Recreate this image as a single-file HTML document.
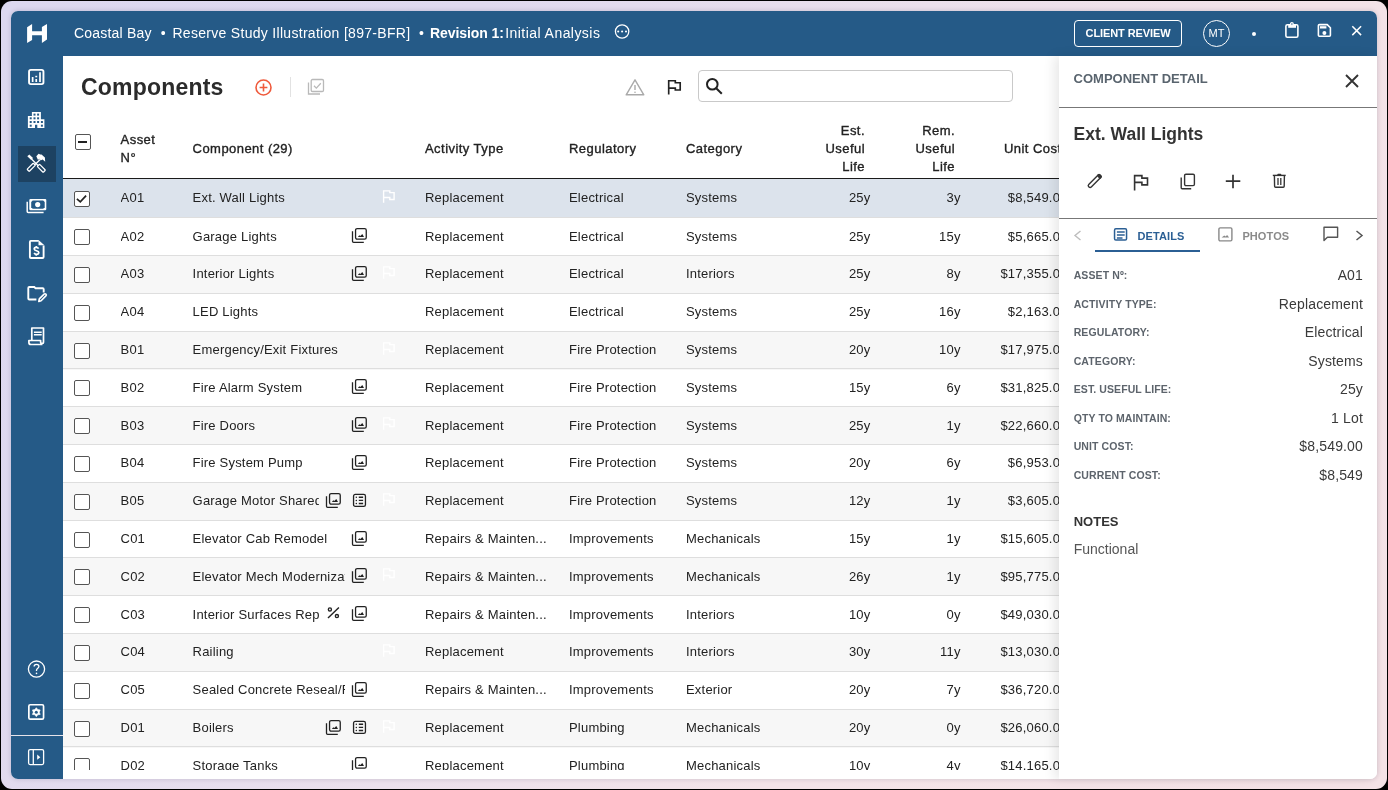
<!DOCTYPE html>
<html><head><meta charset="utf-8">
<style>
*{box-sizing:border-box;margin:0;padding:0}
html,body{width:1388px;height:790px;overflow:hidden;background:#000;font-family:"Liberation Sans",sans-serif;color:#222;-webkit-font-smoothing:antialiased}
.tbl,.panel,.win{will-change:transform}
.frame{position:absolute;left:1px;top:1px;width:1386px;height:788px;border-radius:11px;background:linear-gradient(125deg,#dcd8f0 0%,#dfd9ef 25%,#ebe0ec 48%,#f3e3e8 68%,#f4e2e6 100%)}
.win{position:absolute;left:11px;top:11px;width:1366px;height:768px;border-radius:7px;overflow:hidden;background:#fff;box-shadow:0 0 5px rgba(40,30,60,0.18)}
.abs{position:absolute}
.crumb{position:absolute;left:63px;top:0;height:45px;line-height:44px;font-size:14px;color:#fff;white-space:nowrap;letter-spacing:0.3px}
.crumb b{font-weight:bold;letter-spacing:-0.1px}
.main{position:absolute;left:52px;top:45px;width:1314px;height:723px;background:#fff}
.t{position:absolute;white-space:nowrap;font-size:13px;line-height:16px;overflow:hidden;letter-spacing:0.2px;color:#222}
.row{position:absolute;left:0;width:1010px;height:39px;border-top:1px solid #dedede}
.row.alt{background:#f7f7f7}
.row.sel{background:#dce3ec;border-top:none;height:38px}
.row.sel .cb{top:12px;left:11px}
.cb{position:absolute;left:11px;top:11px;width:16px;height:16px;border:1.2px solid #555;border-radius:2px;background:#fff}
.cb svg{position:absolute;left:0;top:0}
.ic{position:absolute;top:10px;width:16px;height:16px}
.row.sel .ic{top:11px}
.ic svg{display:block;overflow:visible}
.ic.fl{left:319px}
.row .t{top:11px}
.row.up .t{top:10px}
.c-asset{left:57.6px}
.c-comp{left:129.6px}
.c-act{left:362px}
.c-reg{left:506px}
.c-cat{left:623px}
.c-est{right:202.5px}
.c-rem{right:112.4px}
.c-cost{right:5.5px}
.th{position:absolute;font-size:13px;line-height:18px;white-space:nowrap;color:#222;-webkit-text-stroke:0.35px #222;letter-spacing:0.45px}
.tbl{position:absolute;left:63px;top:56px;width:996px;height:714px;overflow:hidden;background:#fff}
.panel{position:absolute;left:1059px;top:56px;width:318px;height:723px;background:#fff;border-bottom-right-radius:7px;box-shadow:-5px 0 12px rgba(0,0,0,0.09)}
.lbl{position:absolute;left:14.7px;font-size:10.5px;line-height:12px;font-weight:bold;color:#5d646c;white-space:nowrap;letter-spacing:0.1px}
.val{position:absolute;right:14px;font-size:14px;line-height:16px;color:#3a3a3a;white-space:nowrap;text-align:right;letter-spacing:0.15px}
.side{position:absolute;left:0;top:0}
</style></head><body>
<div class="frame"></div>
<div class="win">
  <div class="abs" style="left:0;top:0;width:1366px;height:45px;background:#255a87"></div>
  <div class="abs" style="left:0;top:45px;width:52px;height:723px;background:#255a87"></div>
  <div class="crumb"><span style="letter-spacing:0.2px">Coastal Bay</span><span style="margin:0 6.5px 0 9px">•</span>Reserve Study Illustration [897-BFR]<span style="margin:0 6px 0 8.5px">•</span><b>Revision 1:</b><span style="letter-spacing:0.45px;margin-left:1.5px">Initial Analysis</span></div>
  <svg class="abs" style="left:603px;top:13px" width="16" height="16" viewBox="0 0 16 16" fill="none" stroke="#fff" stroke-width="1.3"><circle cx="8.1" cy="7.5" r="6.7"/><circle cx="4.2" cy="7.5" r="1.05" fill="#fff" stroke="none"/><circle cx="8.1" cy="7.5" r="1.05" fill="#fff" stroke="none"/><circle cx="12" cy="7.5" r="1.05" fill="#fff" stroke="none"/></svg>
  <!-- right header -->
  <div class="abs" style="left:1063px;top:9px;width:108px;height:27px;border:1px solid #fff;border-radius:4px;color:#fff;font-size:11px;font-weight:bold;line-height:25px;text-align:center;letter-spacing:-0.1px">CLIENT REVIEW</div>
  <div class="abs" style="left:1192px;top:9px;width:27px;height:27px;border:1px solid #fff;border-radius:50%;color:#fff;font-size:11px;line-height:25px;text-align:center">MT</div>
  <div class="abs" style="left:1241px;top:21px;width:4px;height:4px;border-radius:50%;background:#fff"></div>
  <svg class="abs" style="left:1273px;top:9.5px;overflow:visible" width="16" height="17" viewBox="0 0 16 17" fill="none" stroke="#fff" stroke-width="1.6"><rect x="1.9" y="3.8" width="12" height="12.4" rx="1.5"/><rect x="4.2" y="3" width="7.8" height="3.8" fill="#fff" stroke="none"/><circle cx="7.9" cy="2.9" r="1.35" fill="#255a87" stroke-width="1.2"/></svg>
  <svg class="abs" style="left:1305px;top:11px;overflow:visible" width="16" height="16" viewBox="0 0 16 16" fill="none" stroke="#fff" stroke-width="1.6"><path d="M2.4 3.6c0-.6.4-1 1-1H11.2L14.4 5.8V13.3c0 .6-.4 1-1 1H3.4c-.6 0-1-.4-1-1Z"/><rect x="4" y="4.2" width="6.4" height="2.3" fill="#fff" stroke="none"/><circle cx="8.4" cy="10.9" r="2" fill="#fff" stroke="none"/></svg>
  <svg class="abs" style="left:1340px;top:14px;overflow:visible" width="12" height="12" viewBox="0 0 12 12" fill="none" stroke="#fff" stroke-width="1.5"><path d="M1.3 1.3L10.1 10.1M10.1 1.3L1.3 10.1"/></svg>
  <!-- sidebar -->
  <svg class="side" width="52" height="768" viewBox="11 11 52 768" fill="none" stroke="#fff" stroke-width="1.5">
    <!-- logo -->
    <path d="M27.1 27.3L32.1 23.9V31.2H41.9V27.1L47 23.9V39.5L41.9 43V35.2H32.1V39.9L27.1 42.9Z" fill="#fff" stroke="none"/>
    <!-- chart -->
    <rect x="29.05" y="69.85" width="14.4" height="14.3" rx="1.8" stroke-width="1.9"/>
    <path d="M32.65 77v4.9M36.25 79v2.9M40 72.2v9.7" stroke-width="1.7"/>
    <rect x="35.3" y="75.8" width="1.9" height="1.5" fill="#fff" stroke="none"/>
    <!-- building -->
    <path d="M31.9 112.1h9v7.1h3.5v8.8h-7.1v-3.25h-2.3v3.25h-7.1v-12.1h4z" fill="#fff" stroke="none"/>
    <g fill="#255a87" stroke="none"><rect x="33.5" y="113.6" width="2" height="2"/><rect x="37.1" y="113.6" width="2" height="2"/><rect x="29.7" y="117.3" width="2" height="2"/><rect x="33.5" y="117.3" width="2" height="2"/><rect x="37.1" y="117.3" width="2" height="2"/><rect x="29.7" y="121" width="2" height="2"/><rect x="33.5" y="121" width="2" height="2"/><rect x="37.1" y="121" width="2" height="2"/><rect x="40.9" y="121" width="2" height="2"/><rect x="29.7" y="124.7" width="2" height="2"/><rect x="40.9" y="124.7" width="2" height="2"/></g>
    <!-- active -->
    <rect x="18" y="146" width="38" height="36" fill="#1d4262" stroke="none"/>
    <path d="M31.5 159l6.5 6.5M40.5 159.2L34.5 165" stroke-width="1.3"/>
    <path d="M27.3 156.2l2-1.8 3.7 3.7-1.8 1.9z" fill="#fff" stroke="none"/>
    <rect x="29.75" y="162.9" width="3" height="8.8" rx=".6" transform="rotate(45 31.25 167.3)" stroke-width="1.25"/>
    <rect x="39.75" y="164.1" width="3.2" height="8.4" rx=".6" transform="rotate(-45 41.35 168.3)" stroke-width="1.25"/>
    <path d="M36.3 156.3l2.3-2.5 1.5.8 1.4-.2 3.4 3.2.3 4.1-2.5-2.3-1.7.9-1.6-1.6-1.4 1.2z" fill="#fff" stroke="none"/>
    <!-- money -->
    <rect x="29.3" y="198.9" width="17" height="11.4" rx="1.2" fill="#fff" stroke="none"/>
    <path d="M32.7 200.4h10.5l1.5 1.5v5.4l-1.5 1.5H32.7l-1.5-1.5v-5.4z" fill="#255a87" stroke="none"/>
    <circle cx="37.7" cy="204.6" r="2.6" fill="#fff" stroke="none"/>
    <path d="M27.2 201.8v9.6c0 .6.4 1 1 1h15.4" stroke-width="1.5"/>
    <!-- doc $ -->
    <path d="M38.7 240.9H30.9c-.6 0-1 .4-1 1v15.1c0 .6.4 1 1 1h11.7c.6 0 1-.4 1-1V245.5" stroke-width="1.9"/>
    <path d="M38.5 240.1l5.9 5.2h-5.9z" fill="#fff" stroke="none"/>
    <path d="M38.6 248.6c-.4-.8-1.2-1.2-2.3-1.2-1.3 0-2.1.7-2.1 1.6 0 2.2 4.6 1.2 4.6 3.6 0 1-.9 1.7-2.3 1.7-1.1 0-1.9-.5-2.4-1.3M36.3 246v1.4M36.3 254.3v1.5" stroke-width="1.7"/>
    <!-- folder edit -->
    <path d="M36.4 299.5H29.3c-.6 0-1-.4-1-1V288c0-.6.4-1 1-1h5l1.3 1.3h7.1c.6 0 1 .4 1 1v3.1" stroke-width="1.9"/>
    <path d="M38.8 301.5l.5-2.6 4.8-4.8c.5-.5 1.3-.5 1.8 0s.5 1.3 0 1.8l-4.8 4.8z" stroke-width="1.6" stroke-linejoin="round"/>
    <!-- receipt -->
    <path d="M31.8 340.5V328h11.7v14.3c0 .6-.4 1-1 1h-.9c-.6 0-1-.4-1-1v-1.8H28.9v2c0 1 .7 2 2 2h11.5" stroke-width="1.7" stroke-linejoin="round"/>
    <path d="M33.9 332.3h7.8M33.9 334.8h7.8" stroke-width="1.5"/>
    <!-- help -->
    <circle cx="36.5" cy="669.1" r="8.1" stroke-width="1.3"/>
    <path d="M34.1 666.6c0-1.4 1.1-2.3 2.4-2.3 1.4 0 2.4.9 2.4 2.2 0 1.7-2.4 1.7-2.4 3.8v.7" stroke-width="1.3"/>
    <circle cx="36.5" cy="673.4" r=".8" fill="#fff" stroke="none"/>
    <!-- settings -->
    <rect x="28.85" y="704.75" width="14.7" height="14.4" rx="1.4" stroke-width="1.7"/>
    <path d="M36.3 707.7L37.8 709.6L40.2 709.95L39.3 712.2L40.2 714.45L37.8 714.8L36.3 716.7L34.8 714.8L32.4 714.45L33.3 712.2L32.4 709.95L34.8 709.6Z" fill="#fff" stroke="#fff" stroke-width=".6" stroke-linejoin="round"/>
    <circle cx="36.3" cy="712.2" r="1.5" fill="#255a87" stroke="none"/>
    <path d="M11 735.5h52" stroke="#e6e3ea" stroke-width="1"/>
    <!-- toggle -->
    <rect x="28.6" y="749.6" width="15" height="15" rx="1.5" stroke-width="1.3"/>
    <path d="M33.3 750v14.5" stroke-width="1.3"/>
    <path d="M37.2 754.6l3.1 2.6-3.1 2.6z" fill="#fff" stroke="none"/>
  </svg>
</div>
<div class="tbl">
  <div class="abs" style="left:18px;top:18px;font-size:23px;font-weight:bold;color:#2b2b2b;line-height:26px;letter-spacing:0.2px">Components</div>
  <svg class="abs" style="left:192px;top:22.5px" width="17" height="17" viewBox="0 0 17 17" fill="none" stroke="#ef5a3c" stroke-width="1.6"><circle cx="8.5" cy="8.5" r="7.5"/><path d="M8.5 4.6v7.8M4.6 8.5h7.8"/></svg>
  <div class="abs" style="left:227px;top:21px;width:1px;height:20px;background:#e2e2e2"></div>
  <svg class="abs" style="left:244px;top:22px" width="18" height="18" viewBox="0 0 18 18" fill="none" stroke="#b9b9b9" stroke-width="1.3"><path d="M1.5 4.5v11.5h11.5"/><rect x="4.2" y="1.5" width="12.3" height="12" rx="1.3"/><path d="M7 7.8l2.3 2.3 4.5-4.8"/></svg>
  <svg class="abs" style="left:562px;top:22px" width="20" height="18" viewBox="0 0 20 18" fill="none" stroke="#a9a9a9" stroke-width="1.4"><path d="M10 1.8L1.2 16.8h17.6z" stroke-linejoin="round"/><path d="M10 7v5"/><circle cx="10" cy="14.2" r=".8" fill="#a9a9a9" stroke="none"/></svg>
  <svg class="abs" style="left:603px;top:23px" width="16" height="16" viewBox="0 0 16 16" fill="none" stroke="#222" stroke-width="1.65"><path d="M2.7 15.6V1.7h6.6v2h4.9v7.3H9.3V9.1H2.7"/></svg>
  <div class="abs" style="left:635px;top:14px;width:315px;height:31.5px;border:1px solid #c9c9c9;border-radius:4px"></div>
  <svg class="abs" style="left:642px;top:21px" width="19" height="18" viewBox="0 0 19 18" fill="none" stroke="#222" stroke-width="2"><circle cx="7.3" cy="7.2" r="5.3"/><path d="M11.2 11.2l5.6 5.6"/></svg>
  <!-- table header -->
  <div class="abs" style="left:12px;top:78px;width:15.5px;height:15.5px;border:1.2px solid #555;border-radius:2px"><div class="abs" style="left:2px;top:6px;width:9px;height:1.5px;background:#222"></div></div>
  <div class="th" style="left:57.6px;top:74.5px">Asset<br>N°</div>
  <div class="th" style="left:129.6px;top:83.5px">Component (29)</div>
  <div class="th" style="left:362px;top:83.5px">Activity Type</div>
  <div class="th" style="left:506px;top:83.5px">Regulatory</div>
  <div class="th" style="left:623px;top:83.5px">Category</div>
  <div class="th" style="right:194px;top:65.5px;text-align:right">Est.<br>Useful<br>Life</div>
  <div class="th" style="right:104px;top:65.5px;text-align:right">Rem.<br>Useful<br>Life</div>
  <div class="th" style="left:941px;top:83.5px">Unit Cost</div>
  <div class="abs" style="left:0;top:122px;width:1010px;height:1px;background:#1a1a1a"></div>
<div class="row sel" style="top:123.000px"><span class="cb on"><svg width="14" height="14" viewBox="0 0 14 14"><path d="M1.9 6.8l3.4 3.1 5.8-6.2" fill="none" stroke="#222" stroke-width="1.7"/></svg></span><span class="t c-asset">A01</span><span class="t c-comp" style="width:180px">Ext. Wall Lights</span><span class="ic fl"><svg width="14" height="16" viewBox="0 0 14 16" fill="none" stroke="#fff" stroke-width="1.4"><path d="M1.6 12.7V0.9h6.2v1.7h4.3v6.9H7.8V7.5H1.6"/></svg></span><span class="t c-act">Replacement</span><span class="t c-reg">Electrical</span><span class="t c-cat">Systems</span><span class="t c-est">25y</span><span class="t c-rem">3y</span><span class="t c-cost">$8,549.00</span></div>
<div class="row" style="top:161.000px"><span class="cb"></span><span class="t c-asset">A02</span><span class="t c-comp" style="width:152px">Garage Lights</span><span class="ic" style="left:289px"><svg width="16" height="16" viewBox="0 0 16 16" fill="none" stroke="#222" stroke-width="1.3"><path d="M0.5 3.2V13.3c0 .6.4 1.1 1.1 1.1H11.8"/><rect x="3.55" y="0.55" width="10.7" height="10.6" rx="1.6"/><path d="M5.9 8.9L7.3 7.2 8.3 8.1 10.3 5.9 12 8.9z" fill="#222" stroke="none"/></svg></span><span class="ic fl"><svg width="14" height="16" viewBox="0 0 14 16" fill="none" stroke="#fff" stroke-width="1.4"><path d="M1.6 12.7V0.9h6.2v1.7h4.3v6.9H7.8V7.5H1.6"/></svg></span><span class="t c-act">Replacement</span><span class="t c-reg">Electrical</span><span class="t c-cat">Systems</span><span class="t c-est">25y</span><span class="t c-rem">15y</span><span class="t c-cost">$5,665.00</span></div>
<div class="row up alt" style="top:199.000px"><span class="cb"></span><span class="t c-asset">A03</span><span class="t c-comp" style="width:152px">Interior Lights</span><span class="ic" style="left:289px"><svg width="16" height="16" viewBox="0 0 16 16" fill="none" stroke="#222" stroke-width="1.3"><path d="M0.5 3.2V13.3c0 .6.4 1.1 1.1 1.1H11.8"/><rect x="3.55" y="0.55" width="10.7" height="10.6" rx="1.6"/><path d="M5.9 8.9L7.3 7.2 8.3 8.1 10.3 5.9 12 8.9z" fill="#222" stroke="none"/></svg></span><span class="ic fl"><svg width="14" height="16" viewBox="0 0 14 16" fill="none" stroke="#fff" stroke-width="1.4"><path d="M1.6 12.7V0.9h6.2v1.7h4.3v6.9H7.8V7.5H1.6"/></svg></span><span class="t c-act">Replacement</span><span class="t c-reg">Electrical</span><span class="t c-cat">Interiors</span><span class="t c-est">25y</span><span class="t c-rem">8y</span><span class="t c-cost">$17,355.00</span></div>
<div class="row up" style="top:237.000px"><span class="cb"></span><span class="t c-asset">A04</span><span class="t c-comp" style="width:180px">LED Lights</span><span class="ic fl"><svg width="14" height="16" viewBox="0 0 14 16" fill="none" stroke="#fff" stroke-width="1.4"><path d="M1.6 12.7V0.9h6.2v1.7h4.3v6.9H7.8V7.5H1.6"/></svg></span><span class="t c-act">Replacement</span><span class="t c-reg">Electrical</span><span class="t c-cat">Systems</span><span class="t c-est">25y</span><span class="t c-rem">16y</span><span class="t c-cost">$2,163.00</span></div>
<div class="row up alt" style="top:275.000px"><span class="cb"></span><span class="t c-asset">B01</span><span class="t c-comp" style="width:180px">Emergency/Exit Fixtures</span><span class="ic fl"><svg width="14" height="16" viewBox="0 0 14 16" fill="none" stroke="#fff" stroke-width="1.4"><path d="M1.6 12.7V0.9h6.2v1.7h4.3v6.9H7.8V7.5H1.6"/></svg></span><span class="t c-act">Replacement</span><span class="t c-reg">Fire Protection</span><span class="t c-cat">Systems</span><span class="t c-est">20y</span><span class="t c-rem">10y</span><span class="t c-cost">$17,975.00</span></div>
<div class="row" style="top:312.000px"><span class="cb"></span><span class="t c-asset">B02</span><span class="t c-comp" style="width:152px">Fire Alarm System</span><span class="ic" style="left:289px"><svg width="16" height="16" viewBox="0 0 16 16" fill="none" stroke="#222" stroke-width="1.3"><path d="M0.5 3.2V13.3c0 .6.4 1.1 1.1 1.1H11.8"/><rect x="3.55" y="0.55" width="10.7" height="10.6" rx="1.6"/><path d="M5.9 8.9L7.3 7.2 8.3 8.1 10.3 5.9 12 8.9z" fill="#222" stroke="none"/></svg></span><span class="ic fl"><svg width="14" height="16" viewBox="0 0 14 16" fill="none" stroke="#fff" stroke-width="1.4"><path d="M1.6 12.7V0.9h6.2v1.7h4.3v6.9H7.8V7.5H1.6"/></svg></span><span class="t c-act">Replacement</span><span class="t c-reg">Fire Protection</span><span class="t c-cat">Systems</span><span class="t c-est">15y</span><span class="t c-rem">6y</span><span class="t c-cost">$31,825.00</span></div>
<div class="row alt" style="top:350.000px"><span class="cb"></span><span class="t c-asset">B03</span><span class="t c-comp" style="width:152px">Fire Doors</span><span class="ic" style="left:289px"><svg width="16" height="16" viewBox="0 0 16 16" fill="none" stroke="#222" stroke-width="1.3"><path d="M0.5 3.2V13.3c0 .6.4 1.1 1.1 1.1H11.8"/><rect x="3.55" y="0.55" width="10.7" height="10.6" rx="1.6"/><path d="M5.9 8.9L7.3 7.2 8.3 8.1 10.3 5.9 12 8.9z" fill="#222" stroke="none"/></svg></span><span class="ic fl"><svg width="14" height="16" viewBox="0 0 14 16" fill="none" stroke="#fff" stroke-width="1.4"><path d="M1.6 12.7V0.9h6.2v1.7h4.3v6.9H7.8V7.5H1.6"/></svg></span><span class="t c-act">Replacement</span><span class="t c-reg">Fire Protection</span><span class="t c-cat">Systems</span><span class="t c-est">25y</span><span class="t c-rem">1y</span><span class="t c-cost">$22,660.00</span></div>
<div class="row up" style="top:388.000px"><span class="cb"></span><span class="t c-asset">B04</span><span class="t c-comp" style="width:152px">Fire System Pump</span><span class="ic" style="left:289px"><svg width="16" height="16" viewBox="0 0 16 16" fill="none" stroke="#222" stroke-width="1.3"><path d="M0.5 3.2V13.3c0 .6.4 1.1 1.1 1.1H11.8"/><rect x="3.55" y="0.55" width="10.7" height="10.6" rx="1.6"/><path d="M5.9 8.9L7.3 7.2 8.3 8.1 10.3 5.9 12 8.9z" fill="#222" stroke="none"/></svg></span><span class="ic fl"><svg width="14" height="16" viewBox="0 0 14 16" fill="none" stroke="#fff" stroke-width="1.4"><path d="M1.6 12.7V0.9h6.2v1.7h4.3v6.9H7.8V7.5H1.6"/></svg></span><span class="t c-act">Replacement</span><span class="t c-reg">Fire Protection</span><span class="t c-cat">Systems</span><span class="t c-est">20y</span><span class="t c-rem">6y</span><span class="t c-cost">$6,953.00</span></div>
<div class="row up alt" style="top:426.000px"><span class="cb"></span><span class="t c-asset">B05</span><span class="t c-comp" style="width:126px">Garage Motor Shared Components</span><span class="ic" style="left:262.8px"><svg width="16" height="16" viewBox="0 0 16 16" fill="none" stroke="#222" stroke-width="1.3"><path d="M0.5 3.2V13.3c0 .6.4 1.1 1.1 1.1H11.8"/><rect x="3.55" y="0.55" width="10.7" height="10.6" rx="1.6"/><path d="M5.9 8.9L7.3 7.2 8.3 8.1 10.3 5.9 12 8.9z" fill="#222" stroke="none"/></svg></span><span class="ic" style="left:289px"><svg width="16" height="16" viewBox="0 0 16 16" fill="none" stroke="#222" stroke-width="1.3"><rect x="1.55" y="1.45" width="11.9" height="11.9" rx="1.7"/><path d="M6.8 4.3h4.3M6.8 7.4h4.3M6.8 10.5h4.3" stroke-width="1.4"/><circle cx="4.3" cy="4.3" r=".75" fill="#222" stroke="none"/><circle cx="4.3" cy="7.4" r=".75" fill="#222" stroke="none"/><circle cx="4.3" cy="10.5" r=".75" fill="#222" stroke="none"/></svg></span><span class="ic fl"><svg width="14" height="16" viewBox="0 0 14 16" fill="none" stroke="#fff" stroke-width="1.4"><path d="M1.6 12.7V0.9h6.2v1.7h4.3v6.9H7.8V7.5H1.6"/></svg></span><span class="t c-act">Replacement</span><span class="t c-reg">Fire Protection</span><span class="t c-cat">Systems</span><span class="t c-est">12y</span><span class="t c-rem">1y</span><span class="t c-cost">$3,605.00</span></div>
<div class="row up" style="top:464.000px"><span class="cb"></span><span class="t c-asset">C01</span><span class="t c-comp" style="width:152px">Elevator Cab Remodel</span><span class="ic" style="left:289px"><svg width="16" height="16" viewBox="0 0 16 16" fill="none" stroke="#222" stroke-width="1.3"><path d="M0.5 3.2V13.3c0 .6.4 1.1 1.1 1.1H11.8"/><rect x="3.55" y="0.55" width="10.7" height="10.6" rx="1.6"/><path d="M5.9 8.9L7.3 7.2 8.3 8.1 10.3 5.9 12 8.9z" fill="#222" stroke="none"/></svg></span><span class="ic fl"><svg width="14" height="16" viewBox="0 0 14 16" fill="none" stroke="#fff" stroke-width="1.4"><path d="M1.6 12.7V0.9h6.2v1.7h4.3v6.9H7.8V7.5H1.6"/></svg></span><span class="t c-act">Repairs & Mainten...</span><span class="t c-reg">Improvements</span><span class="t c-cat">Mechanicals</span><span class="t c-est">15y</span><span class="t c-rem">1y</span><span class="t c-cost">$15,605.00</span></div>
<div class="row alt" style="top:501.000px"><span class="cb"></span><span class="t c-asset">C02</span><span class="t c-comp" style="width:152px">Elevator Mech Modernization</span><span class="ic" style="left:289px"><svg width="16" height="16" viewBox="0 0 16 16" fill="none" stroke="#222" stroke-width="1.3"><path d="M0.5 3.2V13.3c0 .6.4 1.1 1.1 1.1H11.8"/><rect x="3.55" y="0.55" width="10.7" height="10.6" rx="1.6"/><path d="M5.9 8.9L7.3 7.2 8.3 8.1 10.3 5.9 12 8.9z" fill="#222" stroke="none"/></svg></span><span class="ic fl"><svg width="14" height="16" viewBox="0 0 14 16" fill="none" stroke="#fff" stroke-width="1.4"><path d="M1.6 12.7V0.9h6.2v1.7h4.3v6.9H7.8V7.5H1.6"/></svg></span><span class="t c-act">Repairs & Mainten...</span><span class="t c-reg">Improvements</span><span class="t c-cat">Mechanicals</span><span class="t c-est">26y</span><span class="t c-rem">1y</span><span class="t c-cost">$95,775.00</span></div>
<div class="row" style="top:539.000px"><span class="cb"></span><span class="t c-asset">C03</span><span class="t c-comp" style="width:126px">Interior Surfaces Repaint</span><span class="ic" style="left:262.8px"><svg width="16" height="16" viewBox="0 0 16 16" fill="none" stroke="#222" stroke-width="1.4"><path d="M12.9 1.4L2 12.1"/><circle cx="3.9" cy="3.4" r="1.55"/><circle cx="10.9" cy="10.1" r="1.55"/></svg></span><span class="ic" style="left:289px"><svg width="16" height="16" viewBox="0 0 16 16" fill="none" stroke="#222" stroke-width="1.3"><path d="M0.5 3.2V13.3c0 .6.4 1.1 1.1 1.1H11.8"/><rect x="3.55" y="0.55" width="10.7" height="10.6" rx="1.6"/><path d="M5.9 8.9L7.3 7.2 8.3 8.1 10.3 5.9 12 8.9z" fill="#222" stroke="none"/></svg></span><span class="ic fl"><svg width="14" height="16" viewBox="0 0 14 16" fill="none" stroke="#fff" stroke-width="1.4"><path d="M1.6 12.7V0.9h6.2v1.7h4.3v6.9H7.8V7.5H1.6"/></svg></span><span class="t c-act">Repairs & Mainten...</span><span class="t c-reg">Improvements</span><span class="t c-cat">Interiors</span><span class="t c-est">10y</span><span class="t c-rem">0y</span><span class="t c-cost">$49,030.00</span></div>
<div class="row up alt" style="top:577.000px"><span class="cb"></span><span class="t c-asset">C04</span><span class="t c-comp" style="width:180px">Railing</span><span class="ic fl"><svg width="14" height="16" viewBox="0 0 14 16" fill="none" stroke="#fff" stroke-width="1.4"><path d="M1.6 12.7V0.9h6.2v1.7h4.3v6.9H7.8V7.5H1.6"/></svg></span><span class="t c-act">Replacement</span><span class="t c-reg">Improvements</span><span class="t c-cat">Interiors</span><span class="t c-est">30y</span><span class="t c-rem">11y</span><span class="t c-cost">$13,030.00</span></div>
<div class="row up" style="top:615.000px"><span class="cb"></span><span class="t c-asset">C05</span><span class="t c-comp" style="width:152px">Sealed Concrete Reseal/Repair</span><span class="ic" style="left:289px"><svg width="16" height="16" viewBox="0 0 16 16" fill="none" stroke="#222" stroke-width="1.3"><path d="M0.5 3.2V13.3c0 .6.4 1.1 1.1 1.1H11.8"/><rect x="3.55" y="0.55" width="10.7" height="10.6" rx="1.6"/><path d="M5.9 8.9L7.3 7.2 8.3 8.1 10.3 5.9 12 8.9z" fill="#222" stroke="none"/></svg></span><span class="ic fl"><svg width="14" height="16" viewBox="0 0 14 16" fill="none" stroke="#fff" stroke-width="1.4"><path d="M1.6 12.7V0.9h6.2v1.7h4.3v6.9H7.8V7.5H1.6"/></svg></span><span class="t c-act">Repairs & Mainten...</span><span class="t c-reg">Improvements</span><span class="t c-cat">Exterior</span><span class="t c-est">20y</span><span class="t c-rem">7y</span><span class="t c-cost">$36,720.00</span></div>
<div class="row up alt" style="top:653.000px"><span class="cb"></span><span class="t c-asset">D01</span><span class="t c-comp" style="width:126px">Boilers</span><span class="ic" style="left:262.8px"><svg width="16" height="16" viewBox="0 0 16 16" fill="none" stroke="#222" stroke-width="1.3"><path d="M0.5 3.2V13.3c0 .6.4 1.1 1.1 1.1H11.8"/><rect x="3.55" y="0.55" width="10.7" height="10.6" rx="1.6"/><path d="M5.9 8.9L7.3 7.2 8.3 8.1 10.3 5.9 12 8.9z" fill="#222" stroke="none"/></svg></span><span class="ic" style="left:289px"><svg width="16" height="16" viewBox="0 0 16 16" fill="none" stroke="#222" stroke-width="1.3"><rect x="1.55" y="1.45" width="11.9" height="11.9" rx="1.7"/><path d="M6.8 4.3h4.3M6.8 7.4h4.3M6.8 10.5h4.3" stroke-width="1.4"/><circle cx="4.3" cy="4.3" r=".75" fill="#222" stroke="none"/><circle cx="4.3" cy="7.4" r=".75" fill="#222" stroke="none"/><circle cx="4.3" cy="10.5" r=".75" fill="#222" stroke="none"/></svg></span><span class="ic fl"><svg width="14" height="16" viewBox="0 0 14 16" fill="none" stroke="#fff" stroke-width="1.4"><path d="M1.6 12.7V0.9h6.2v1.7h4.3v6.9H7.8V7.5H1.6"/></svg></span><span class="t c-act">Replacement</span><span class="t c-reg">Plumbing</span><span class="t c-cat">Mechanicals</span><span class="t c-est">20y</span><span class="t c-rem">0y</span><span class="t c-cost">$26,060.00</span></div>
<div class="row" style="top:690.000px"><span class="cb"></span><span class="t c-asset">D02</span><span class="t c-comp" style="width:152px">Storage Tanks</span><span class="ic" style="left:289px"><svg width="16" height="16" viewBox="0 0 16 16" fill="none" stroke="#222" stroke-width="1.3"><path d="M0.5 3.2V13.3c0 .6.4 1.1 1.1 1.1H11.8"/><rect x="3.55" y="0.55" width="10.7" height="10.6" rx="1.6"/><path d="M5.9 8.9L7.3 7.2 8.3 8.1 10.3 5.9 12 8.9z" fill="#222" stroke="none"/></svg></span><span class="ic fl"><svg width="14" height="16" viewBox="0 0 14 16" fill="none" stroke="#fff" stroke-width="1.4"><path d="M1.6 12.7V0.9h6.2v1.7h4.3v6.9H7.8V7.5H1.6"/></svg></span><span class="t c-act">Replacement</span><span class="t c-reg">Plumbing</span><span class="t c-cat">Mechanicals</span><span class="t c-est">10y</span><span class="t c-rem">4y</span><span class="t c-cost">$14,165.00</span></div>
</div>
<div class="panel">
  <div class="abs" style="left:14.6px;top:16px;font-size:13px;font-weight:bold;color:#59646e;line-height:14px;white-space:nowrap">COMPONENT DETAIL</div>
  <svg class="abs" style="left:286px;top:18px" width="14" height="14" viewBox="0 0 14 14" fill="none" stroke="#333" stroke-width="1.9"><path d="M1 1l12 12M13 1L1 13"/></svg>
  <div class="abs" style="left:0;top:51px;width:318px;height:1px;background:#777"></div>
  <div class="abs" style="left:14.6px;top:68px;font-size:17.5px;font-weight:bold;color:#333;line-height:20px;white-space:nowrap">Ext. Wall Lights</div>
  <svg class="abs" style="left:27px;top:117px;overflow:visible" width="16" height="16" viewBox="0 0 16 16" fill="none" stroke="#333" stroke-width="1.4"><g transform="rotate(45 8.6 8.1)"><rect x="6.8" y="0" width="3.6" height="16.2" rx="1.6"/><rect x="6.1" y="-0.7" width="5" height="3.6" rx="1.5" fill="#333" stroke="none"/></g></svg>
  <svg class="abs" style="left:74px;top:118px" width="16" height="17" viewBox="0 0 16 17" fill="none" stroke="#333" stroke-width="1.6"><path d="M1.6 16.5V1.6h7.3v2.5h5.6v6.8H8.9V8.4H1.6"/></svg>
  <svg class="abs" style="left:120.5px;top:117px" width="16" height="17" viewBox="0 0 16 17" fill="none" stroke="#333" stroke-width="1.4"><path d="M1.2 4.5v10.2c0 .6.4 1 1 1h9"/><rect x="4.6" y="1.2" width="9.8" height="11.4" rx="1.3"/></svg>
  <svg class="abs" style="left:166.3px;top:118px" width="16" height="16" viewBox="0 0 16 16" fill="none" stroke="#333" stroke-width="1.7"><path d="M8 .8v13.5M.8 7.2h14.5"/></svg>
  <svg class="abs" style="left:213px;top:117px;overflow:visible" width="15" height="16" viewBox="0 0 15 16" fill="none" stroke="#333" stroke-width="1.4"><path d="M.8 2.4h12.9"/><rect x="5.3" y="0.7" width="4" height="1.8" rx=".8" fill="#333" stroke="none"/><path d="M2.4 2.4L2.6 13.2c0 .6.4 1 1 1h7.6c.6 0 1-.4 1-1L12.4 2.4"/><path d="M6 4.9v7.1M8.8 4.9v7.1" stroke-width="1.3"/></svg>
  <div class="abs" style="left:0;top:162px;width:318px;height:1px;background:#777"></div>
  <!-- tabs -->
  <svg class="abs" style="left:14px;top:174px" width="9" height="11" viewBox="0 0 9 11" fill="none" stroke="#bdbdbd" stroke-width="1.4"><path d="M7.5 1L2 5.5l5.5 4.5"/></svg>
  <svg class="abs" style="left:54px;top:171px" width="15" height="15" viewBox="0 0 15 15" fill="none" stroke="#2b5f94" stroke-width="1.4"><rect x="1.55" y="1.85" width="12" height="11.1" rx="1.3" stroke-width="1.5"/><path d="M3.9 4.9h7.8M3.9 8h7.8M3.9 11.1h5.6" stroke-width="1.5"/></svg>
  <div class="abs" style="left:78.5px;top:173.5px;font-size:11px;font-weight:bold;color:#2b5f94;line-height:12px;letter-spacing:0.1px">DETAILS</div>
  <div class="abs" style="left:35.6px;top:194px;width:105.4px;height:2px;background:#2b5f94"></div>
  <svg class="abs" style="left:159px;top:171px" width="15" height="15" viewBox="0 0 15 15" fill="none" stroke="#888" stroke-width="1.4"><rect x=".9" y=".9" width="13" height="13" rx="1.3"/><path d="M3.6 10.6h7.5l-2-2.6-1.5 1.6-1.3-1.2z" fill="#888" stroke="none"/></svg>
  <div class="abs" style="left:183.4px;top:173.5px;font-size:11px;font-weight:bold;color:#8a8a8a;line-height:12px;letter-spacing:0.1px">PHOTOS</div>
  <svg class="abs" style="left:263.5px;top:170px" width="17" height="16" viewBox="0 0 17 16" fill="none" stroke="#555" stroke-width="1.4"><path d="M1 1.2h13.6v10H4.4L1 14.6z" stroke-linejoin="round"/></svg>
  <svg class="abs" style="left:296px;top:174px" width="9" height="11" viewBox="0 0 9 11" fill="none" stroke="#555" stroke-width="1.5"><path d="M1.5 1L7 5.5l-5.5 4.5"/></svg>
  <!-- fields -->
  <div class="lbl" style="top:213px">ASSET Nº:</div><div class="val" style="top:211px">A01</div>
  <div class="lbl" style="top:242px">ACTIVITY TYPE:</div><div class="val" style="top:239.5px">Replacement</div>
  <div class="lbl" style="top:270px">REGULATORY:</div><div class="val" style="top:268px">Electrical</div>
  <div class="lbl" style="top:299px">CATEGORY:</div><div class="val" style="top:296.5px">Systems</div>
  <div class="lbl" style="top:327px">EST. USEFUL LIFE:</div><div class="val" style="top:325px">25y</div>
  <div class="lbl" style="top:356px">QTY TO MAINTAIN:</div><div class="val" style="top:353.5px">1 Lot</div>
  <div class="lbl" style="top:384px">UNIT COST:</div><div class="val" style="top:382px">$8,549.00</div>
  <div class="lbl" style="top:413px">CURRENT COST:</div><div class="val" style="top:410.5px">$8,549</div>
  <div class="abs" style="left:14.7px;top:458px;font-size:13px;font-weight:bold;color:#333;line-height:16px">NOTES</div>
  <div class="abs" style="left:14.7px;top:484.5px;font-size:14px;color:#555;line-height:16px">Functional</div>
</div>
</body></html>
